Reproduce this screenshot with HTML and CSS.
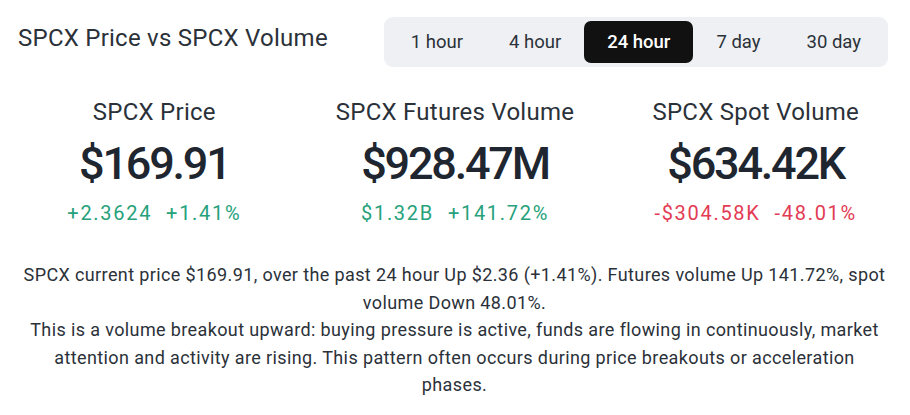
FILE: index.html
```html
<!DOCTYPE html>
<html>
<head>
<meta charset="utf-8">
<link rel="stylesheet" href="styles.css">
</head>
<body>
<div class="card">
  <div class="header">
    <h2 class="title">SPCX Price vs SPCX Volume</h2>
    <div class="tabs">
      <span class="tab">1 hour</span>
      <span class="tab">4 hour</span>
      <span class="tab active">24 hour</span>
      <span class="tab">7 day</span>
      <span class="tab">30 day</span>
    </div>
  </div>
  <div class="stats">
    <div class="stat">
      <div class="label">SPCX Price</div>
      <div class="value">$169.91</div>
      <div class="change up"><span>+2.3624</span><span>+1.41%</span></div>
    </div>
    <div class="stat">
      <div class="label">SPCX Futures Volume</div>
      <div class="value">$928.47M</div>
      <div class="change up"><span>$1.32B</span><span>+141.72%</span></div>
    </div>
    <div class="stat">
      <div class="label">SPCX Spot Volume</div>
      <div class="value">$634.42K</div>
      <div class="change down"><span>-$304.58K</span><span>-48.01%</span></div>
    </div>
  </div>
  <p class="summary">SPCX current price $169.91, over the past 24 hour Up $2.36 (+1.41%). Futures volume Up 141.72%, spot volume Down 48.01%.<br>This is a volume breakout upward: buying pressure is active, funds are flowing in continuously, market attention and activity are rising. This pattern often occurs during price breakouts or acceleration phases.</p>
</div>
</body>
</html>
```
FILE: styles.css
```css
* { box-sizing: border-box; }
html, body { margin: 0; padding: 0; background: #fff; }
body { font-family: "Roboto", "Noto Sans", sans-serif; color: #2b3139; }
.card { width: 910px; padding: 17px 22px 0 18px; }
.header { display: flex; justify-content: space-between; align-items: flex-start; }
.title { margin: 6px 0 0; font-size: 24px; font-weight: 400; letter-spacing: 0.25px; line-height: 30px; color: #2b3139; }
.tabs { display: flex; align-items: center; background: #eef0f3; border-radius: 9px; padding: 4px; height: 50px; }
.tab { display: flex; align-items: center; justify-content: center; height: 42px; padding: 0 23px; font-size: 18.5px; color: #2b3139; border-radius: 7px; }
.tab.active { background: #111; color: #fff; font-weight: 500; }
.stats { display: grid; grid-template-columns: repeat(3, 1fr); margin: 30px -18px 0 -14px; }
.stat { display: flex; flex-direction: column; align-items: center; }
.label { font-size: 24px; font-weight: 400; letter-spacing: 0.25px; line-height: 30px; color: #2b3139; }
.value { font-size: 45px; font-weight: 500; letter-spacing: -2.2px; line-height: 56px; margin-top: 9px; color: #202630; }
.change { display: flex; gap: 14px; font-size: 20px; letter-spacing: 1.7px; line-height: 26px; margin-top: 8px; }
.up { color: #26a17b; }
.down { color: #e33b54; }
.summary { width: 867px; margin: 35px 0 0 3px; text-align: center; font-size: 18px; letter-spacing: 0.38px; line-height: 27.5px; color: #2b3139; }
```
